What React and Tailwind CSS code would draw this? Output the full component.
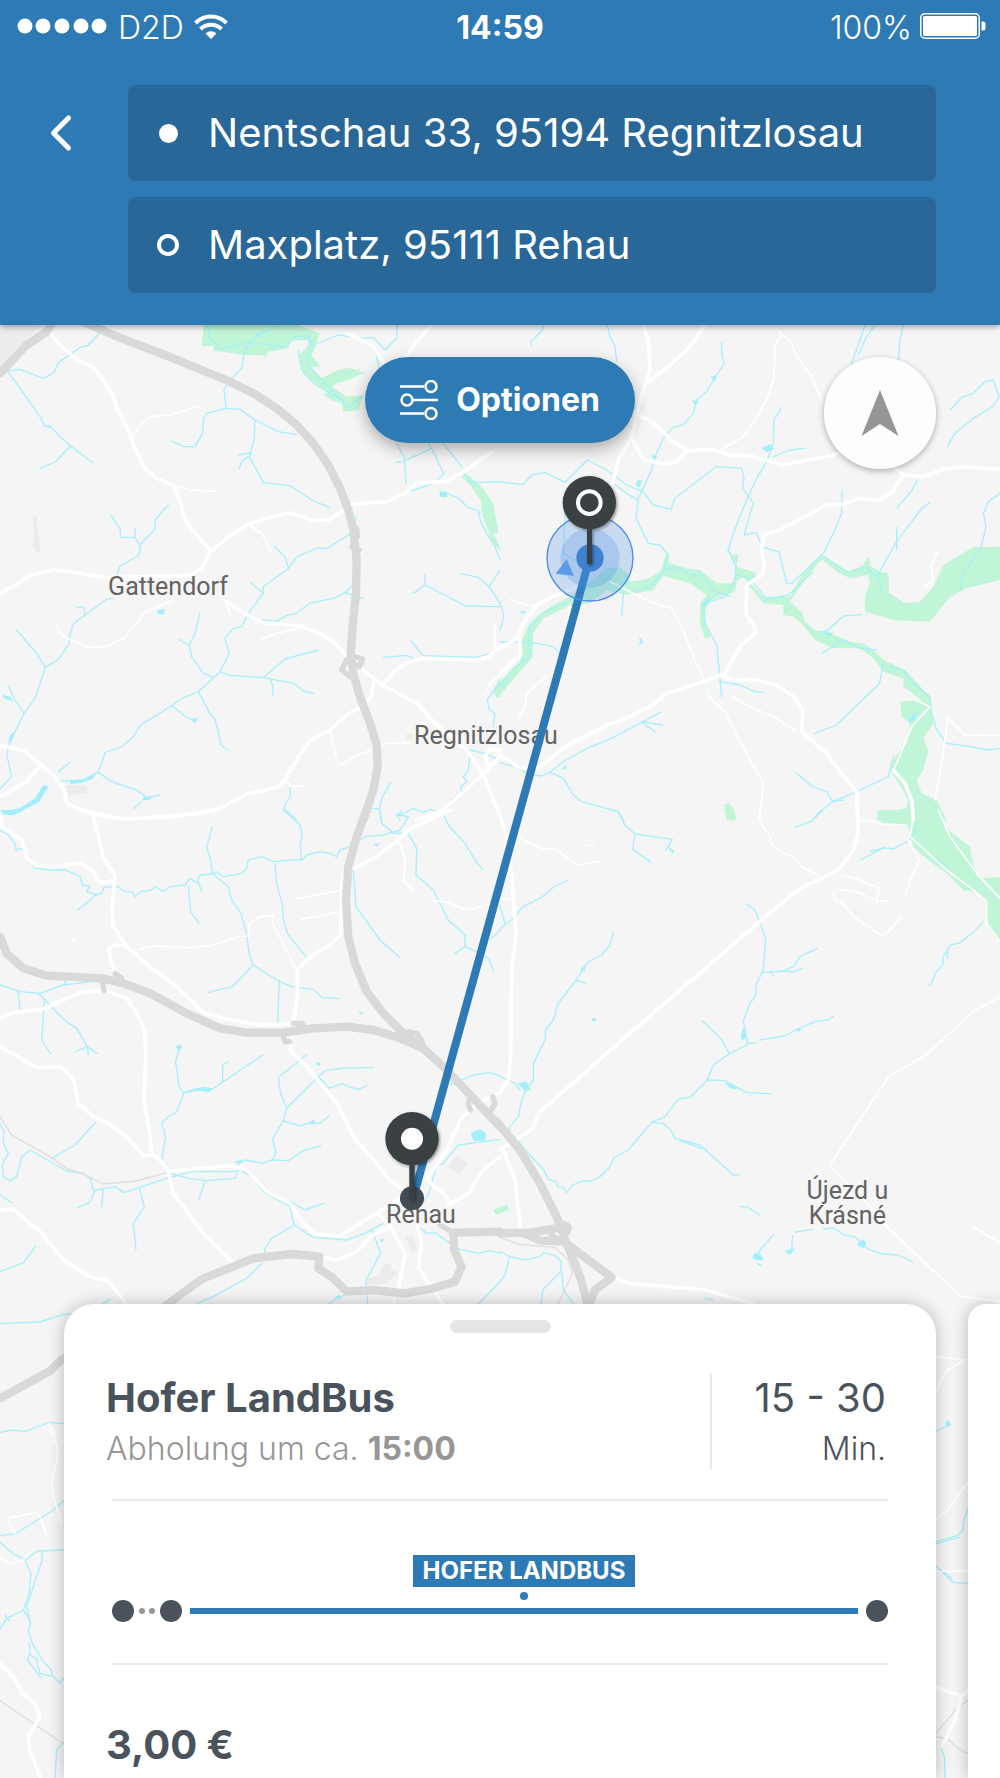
import { ChevronLeft } from 'lucide-react';

// Map sections, each with its own origin; points are local to the section.
const sections = [
  {
    x: 0,
    y: 0,
    areas: [
      '0,10 125,10 70,70 0,145',
      '98,592 110,592 122,698 108,698 106,686 95,682 104,670',
      '196,1396 258,1394 266,1418 206,1424',
      '1215,1245 1240,1240 1235,1262 1218,1258',
    ],
    parks: [
      '612,10 880,10 960,40 945,80 935,105 962,140 925,140 965,175 1000,155 1040,143 1070,150 1080,145 1075,158 1100,155 1050,178 1010,190 995,200 1040,230 1090,225 1075,270 1030,275 1025,250 995,240 970,225 985,215 940,185 905,150 900,105 925,75 925,60 870,62 865,85 805,95 800,107 735,105 690,98 640,92 640,78 605,78',
      '1395,458 1440,495 1480,550 1495,640 1468,642 1445,580 1442,540 1415,500 1385,470',
      '1468,642 1480,642 1500,680 1500,690 1475,665',
      '1500,1075 1480,1110 1490,1135 1500,1130',
    ],
    lakes: [
      '5,1475 60,1465 105,1435 130,1395 145,1400 118,1445 70,1470 40,1486 10,1484',
      '210,1382 250,1380 290,1360 275,1378 240,1390 212,1392',
      '1318,514 1342,516 1340,532 1320,530',
      '140,314 154,318 146,326',
      '470,872 495,866 490,884 476,882',
      '572,1196 595,1194 585,1210',
      '8,1125 30,1130 40,1145 12,1135',
      '25,1270 30,1245 45,1235 35,1265',
      '430,1430 455,1430 450,1440 428,1440',
      '765,40 785,38 775,52',
    ],
    water: [
      '298,40 262,78 240,82 175,128 162,158 130,175 60,148 22,152 60,205 120,290 135,320 150,318 180,350 212,378 278,428',
      '212,378 165,426 120,446',
      '840,15 775,45 750,68 665,85 628,55 625,15',
      '750,68 735,90 725,145 690,180 672,210 678,265 620,280 610,300 608,340 585,380 550,380 515,363',
      '750,68 860,80 880,50 925,48 940,75 1015,45 1090,55 1120,52 1155,90 1190,55 1192,15',
      '920,55 935,70 920,130 980,195 1045,262 1090,228',
      '895,90 905,150 940,190 1025,240',
      '678,265 720,268 765,300 835,335 890,344',
      '765,300 762,360 748,410 790,488 870,497 935,540 990,563',
      '716,405 752,398 748,410 726,422 718,444',
      '505,555 490,570 466,600 464,628 420,675 418,705 360,738 350,765',
      '332,585 360,625 362,652 404,652 420,675 M404,652 405,626',
      '822,678 855,710 866,745 790,800 790,820 745,880 724,920 700,925 674,955 688,1000 660,1055 595,1115 545,1135 515,1157 420,1217 400,1250 365,1280 316,1297 295,1355 250,1380 170,1384',
      '866,745 888,712 950,684 980,686 1050,642 1070,590',
      '752,788 790,820',
      '1090,835 1035,818 1000,835 928,850 890,880 860,886 830,904 745,895',
      '1058,795 1035,818',
      '340,836 322,836 255,885 220,912 210,940 208,970 175,1018 136,1042 105,1135 72,1180 30,1265 20,1300 34,1370 0,1407',
      '255,885 250,860 230,862',
      '50,930 110,1000 136,1042',
      '72,1180 45,1140 25,1097',
      '600,878 585,940 568,975 575,1010 608,1058 640,1073 M568,975 535,958',
      '660,1055 690,1066 790,1073 855,1017 955,990',
      '790,1073 880,1090 914,1115 940,1120 M810,1078 820,1100 817,1125',
      '515,1157 560,1192 580,1200',
      '595,1115 628,1178 645,1197 664,1275 685,1290',
      '295,1357 335,1385 410,1410 440,1432 480,1425 M400,1466 425,1445 M175,1355 210,1327',
      '870,1402 872,1425 850,1465 890,1500',
      '1172,1387 1145,1435 1138,1466 1115,1466 M1138,1466 1145,1500',
      '1190,370 1214,415 1218,488 M1190,428 1215,422 1295,385 1285,370 M1295,385 1332,462 1300,490 1235,513',
      '1330,370 1385,440 M1400,465 1415,488 1500,486',
      '1342,520 1375,534 1405,563 1435,572 1442,605 1460,640 1485,680 1500,720',
      '1130,110 1150,200 M1275,765 1275,795 1398,858 1500,860 M1275,795 1240,820',
      '1380,760 1435,772 1468,800 1500,850 M1500,750 1468,800',
      '1150,1012 1220,1006 1240,1014 M1232,962 1270,1007 1430,1012 1470,1000',
      '1500,1085 1462,1140 1468,1170 1485,1180 1480,1220',
      '1500,1320 1455,1300 1410,1290 M1410,1310 1405,1350 1390,1370 1400,1385 1382,1400 1385,1420 1355,1440 1345,1465 1310,1475 1290,1468 1270,1478 1240,1465 1215,1478 1190,1485 1200,1500',
    ],
    minor: [
      '398,350 420,315 452,290 510,285 595,260',
      '522,497 570,510 648,514',
      '745,615 785,640 815,698',
      '165,910 190,950 265,982 320,980 370,955 410,910 435,877 518,842',
      '675,840 690,882 M785,958 830,940 895,925',
      '990,1230 1010,1315 M1015,1337 1070,1308 1160,1270 1235,1268',
      '855,1380 875,1400 912,1398 M1485,910 1484,985 M1500,1065 1470,1090 1455,1120',
    ],
    roads: [
      '150,40 185,80 230,118 285,145 310,185 338,220 350,265 385,330 400,375 435,445 470,475 522,497 540,545 560,610 632,692',
      '0,822 95,765 160,750 210,755 320,773 440,770 570,765 605,745 632,695 680,655 740,615 800,595 870,578 940,602 985,600 1060,552 1160,545 1215,520 1250,490 1340,483 1400,450 1475,395',
      '680,845 740,885 790,908 900,918 960,940 1005,970 1050,1020 1150,1097 1250,1150 1310,1215 1400,1290 1450,1362 1500,1490',
      '1150,1097 1180,1055 1220,1028 1270,1015 1430,1020 1465,1010 1500,980',
      '1120,1090 1115,1130 1085,1160 1040,1185 990,1230 930,1262 895,1310 855,1380 830,1403 740,1422 670,1460 600,1480 400,1497 330,1492 270,1480 200,1450 192,1408 165,1370 120,1332 70,1292 0,1275',
      '120,1338 80,1385 0,1430',
      '1040,40 1115,75 1150,125 M1220,108 1250,65 1290,20',
      '1500,1310 1450,1362 1330,1470 1250,1500',
      '1450,1362 1465,1340 1455,1310 1470,1285 1500,1290',
    ],
    major: [
      '155,10 140,35 80,75 0,160',
      '260,10 340,45 520,115 690,185 760,220 830,265 890,315 940,370 985,435 1020,505 1045,570 1060,630 1070,720 1068,820 1058,920 1052,1000 1060,1060 1080,1130 1110,1210 1130,1275 1133,1340 1120,1410 1090,1500',
    ],
    ramps: ['1050,1005 1088,1018 1078,1040 1058,1030', '1055,1010 1040,1020 1025,1050 1050,1070', '1070,625 1072,650 M1055,680 1078,690'],
  },
  {
    x: 1500,
    y: 0,
    areas: [],
    parks: [
      '0,1085 40,1045 62,1020 65,960 90,910 150,860 210,830 265,790 320,745 360,742 385,765 390,785 440,778 480,755 500,700 508,705 505,728 560,745 600,750 650,790 700,790 708,760 705,725 678,690 690,695 700,705 715,700 710,740 770,758 765,775 750,790 790,830 830,830 870,830 905,765 960,705 1045,755 1090,735 1107,708 1112,738 1140,755 1165,760 1168,820 1215,850 1260,845 1300,800 1330,735 1420,682 1500,680 1500,780 1400,805 1350,830 1290,905 1180,900 1095,875 1095,830 1110,790 1105,765 1050,775 1010,755 965,718 920,770 880,830 870,845 905,875 915,905 945,930 990,940 1050,965 1090,970 1130,1000 1150,1020 1215,1050 1290,1130 1290,1160 1300,1210 1270,1255 1285,1290 1270,1350 1250,1380 1265,1420 1310,1440 1340,1500 1130,1500 1135,1470 1160,1475 1220,1465 1225,1440 1200,1395 1170,1350 1185,1310 1220,1270 1230,1210 1205,1190 1200,1145 1265,1140 1210,1100 1210,1075 1150,1055 1120,1015 1080,985 1000,985 945,960 910,915 880,890 850,885 850,855 790,850 750,800 730,770 710,785 705,815 640,835 618,860 615,900 632,950 615,955 600,910 600,850 620,825 570,790 490,768 460,810 380,825 320,810 270,850 200,860 130,895 100,940 98,1010 60,1055 0,1125',
      '672,1455 685,1450 700,1465 705,1500 680,1500',
    ],
    lakes: [
      '632,170 650,165 645,185',
      '785,385 810,372 822,388 800,396',
      '452,405 472,408 465,420',
      '412,478 426,482 420,502 408,498',
      '408,982 420,970 418,950 430,966',
      '575,240 598,246 586,256',
      '1225,1200 1245,1175 1250,1190 1232,1210',
      '55,875 80,874 70,882',
      '972,935 1000,940 990,950',
      '185,1345 200,1335 196,1350',
      '608,850 634,830 630,845 612,860',
    ],
    water: [
      '132,15 126,32 92,66 93,75 M322,15 330,50 345,80 350,125',
      '665,66 665,100 672,132 640,180 620,215 590,240 580,280 548,315 520,322 490,355 465,410 455,450 415,535 408,595 445,670 480,675 505,705 490,755 450,800 400,815',
      '0,486 70,493 95,465 135,458 195,487 262,420 320,450 380,495 430,515 460,555 513,568 525,535 648,440 725,445 732,475 728,505 760,550 732,645 768,637 787,680 838,697 860,790 875,790 965,705 1045,758 1100,742 1135,775 1145,795 1138,818',
      '340,490 380,520 412,540',
      '845,262 822,300 820,370 800,425 770,475 740,540 700,640 685,690 708,740 705,775 680,828 610,850 615,910 650,975 660,1080 665,1130',
      '820,410 870,390 915,385',
      '1095,15 1080,60 1055,130 M1125,15 1100,50 1075,105 M1210,15 1200,60 1195,125',
      '1350,270 1385,232 1420,220 1455,185 1480,180 1498,230 1480,258 1420,295 1365,340 1342,380',
      '1253,480 1235,512 1190,565 M1190,622 1190,690',
      '1026,510 1025,580 1000,640 970,700 M1290,548 1265,565 1190,665 1130,770',
      '1500,520 1465,545 1450,580 1458,620 1445,675 1420,720 1392,755 1380,810',
      '710,765 750,775 800,838 865,825 940,755',
      '490,750 530,742 575,765 605,765 645,815 690,828',
      '960,938 985,930 1030,888 1085,884 M965,1000 1030,960 1080,985 1130,990',
      '660,1085 720,1095 765,1115 790,1118',
      '1150,1030 1138,1092 1045,1180 1010,1215 945,1240',
      '1170,1040 1210,1050 1235,1085 1290,1130 1295,1180 1310,1230 1340,1270 1400,1278 1465,1290 1500,1285',
      '0,1328 45,1340 85,1362 125,1368 150,1357 190,1325 260,1285 320,1262 420,1210 480,1178 M425,1205 488,1215 M430,1210 465,1235',
      '150,1357 190,1375 220,1425 245,1445 355,1475 370,1500',
      '890,1360 935,1398 980,1415 998,1445 1070,1415 1165,1370 1180,1310',
      '998,1445 960,1475 938,1500 M998,1445 1030,1440',
      '195,580 190,700 225,720 M0,965 95,968 160,980 180,1000 M0,845 12,890 0,930',
      '270,800 220,840 125,880 90,920 85,965 90,1010 40,1045 0,1095',
      '372,800 365,885 372,888 M375,765 385,800',
    ],
    minor: [
      '825,20 845,45 825,75 822,170 800,240 760,310 730,350 665,388 M845,45 870,60 890,110 930,160 965,240',
      '330,785 390,815 450,845 515,865 545,920 580,1010 610,1075',
      '620,1110 630,1135 675,1175 720,1265 790,1390 778,1500',
      '700,1132 760,1165 830,1195 885,1232',
      '1500,1247 1395,1245 1345,1195 1320,1360 1305,1440',
      '1312,695 1293,740 1300,780 1275,800 M150,1060 80,1120 75,1165 55,1195',
      '30,838 60,850 100,860 M210,850 205,900',
      '1180,1350 1190,1330 1235,1220 1290,1160 1235,1135',
    ],
    roads: [
      '430,15 445,60 450,150 420,240 395,350 355,420 338,490',
      '615,15 570,80 510,135 440,190',
      '420,288 460,308 520,365 565,392 640,388 690,405 750,407 850,435 1000,405 1090,365 1140,400 1210,465 1270,470 1330,448 1390,440 1500,448',
      '395,355 430,418 490,433 530,425 560,395',
      '1210,465 1175,518 1135,542 1075,535 1030,553 980,555 840,630 790,645 785,690 793,745 785,765 740,795 738,880 770,935 720,980 670,1068',
      '0,1305 60,1345 120,1340 205,1275 330,1212 370,1200 460,1155 500,1120 600,1088 660,1065 700,1082 760,1078 830,1095 880,1130 908,1170 905,1235 980,1300 1020,1355 1070,1415 1073,1500',
      '0,985 50,955 70,910 110,855 160,830 230,800 M60,960 62,1005 0,1060',
      '1180,1350 1215,1390 1235,1440 1240,1500',
    ],
    major: [],
    ramps: [],
  },
  {
    x: 0,
    y: 1470,
    areas: [
      '1370,1035 1405,1060 1378,1092 1345,1070',
      '1215,1280 1235,1275 1255,1320 1235,1325',
      '1150,1365 1170,1358 1175,1380 1195,1385 1160,1420 1100,1425 1105,1405 1140,1395',
    ],
    parks: ['1480,1200 1500,1190 1500,1210 1488,1213'],
    lakes: [
      '0,0 70,0 60,8 30,15 10,10',
      '527,710 538,702 547,712 538,722',
      '575,838 610,830 640,836 628,847',
      '1412,970 1440,957 1458,970 1455,992 1420,992',
      '948,760 955,755 962,762 955,768',
      '1068,595 1075,605 1092,608 1080,613',
      '1120,102 1140,100 1130,110',
      '700,1056 735,1048 720,1060',
      '930,935 945,928 945,940 935,945',
      '1140,1288 1152,1288 1146,1298',
    ],
    water: [
      '0,60 25,75 45,100 48,120 65,115 85,150 105,175 155,180 195,180 220,190 240,200 248,225 270,228 260,245 290,255 305,250 312,232 350,228 375,245 395,245 405,260 420,245 455,240 465,230 490,245 510,230 555,225 570,205 590,218 600,195 635,192 650,185 670,200 725,190 740,175 745,150 785,140 820,155 880,150 910,148 920,135 960,125 990,130 1010,140 1020,120 1050,110 1095,80 1150,75 1200,60 1225,20 1195,15 1205,0',
      '288,255 234,300 M565,228 572,305 597,340 M595,215 605,245',
      '637,50 620,110 632,150 637,190 685,230 695,270 722,308 740,370 747,430 760,465 830,510 875,530 940,538 965,562 1018,566',
      '760,465 697,530 625,547 M838,510 833,635',
      '825,160 830,220 847,285 850,330 862,370 920,442',
      '850,0 900,45 907,75 900,105 905,150',
      '1060,180 1068,290 1140,390 1200,443',
      '1138,0 1145,40 1180,70 1225,70 1250,115 1248,195 1300,240 1345,330 1395,375 1395,410 1430,425 1465,445 1480,482 M1395,410 1365,430 M1500,360 1470,390',
      '1325,0 1345,45 1395,100 1425,150 1448,178',
      '0,525 60,545 120,550 190,525 300,512 M55,545 60,600 M190,525 200,510',
      '115,550 155,590 195,632 230,655 262,710 227,725 M262,710 290,730 M262,710 265,735',
      '133,575 125,690 153,732',
      '538,715 527,755 537,830 552,848 640,835 788,735 M668,812 668,765 685,755 M552,848 528,908 505,920 485,940 497,980 485,1050 495,1080',
      '552,848 580,838',
      '920,735 835,802 842,850 860,895 848,935 818,985 828,1030 815,1050 790,1060 735,1050 710,1065 M1122,772 1025,775 975,782 955,800 925,830 860,895',
      '955,800 988,835 1025,820 1045,830 1075,838 1105,825 M848,932 900,948 930,938 960,940 988,918',
      '815,1050 865,1052 910,1022 962,1008',
      '287,937 225,1005 155,1045',
      '0,940 12,965 10,1000 25,1030 8,1060 10,1100 30,1112 50,1100 65,1040 90,1020 200,1083 250,1090 272,1108 280,1142 345,1130 372,1148 500,1105 575,1085 700,1085 720,1078 760,1105 790,1145 870,1190 882,1245 940,1282 1040,1290 1095,1270 1150,1240',
      '0,1155 35,1178 M233,1193 268,1178 285,1142 310,1135 305,1190',
      '418,1132 433,1190 400,1240 408,1318 M615,1112 597,1167 M510,1090 565,1105 620,1112 705,1105 715,1080',
      '840,1170 872,1175 915,1200 972,1180 M882,1245 815,1285 795,1315 795,1335 M785,1360 740,1405 640,1460 590,1480',
      '108,1308 70,1358 0,1385 M330,1468 300,1487',
      '1118,1265 1142,1330 1098,1410 1103,1480 M1042,1452 1010,1465 985,1483',
      '1500,988 1375,1005 1330,1060 1310,1068 1285,1155 1255,1195 M1255,1250 1280,1270 1305,1268 1370,1315 1435,1330 1470,1322 1500,1330',
      '1350,825 1420,795 1470,788 1500,798 M1500,1415 1435,1483',
    ],
    minor: [
      '418,418 460,408 560,413 630,408 710,382 745,378 748,340 780,320 820,315 815,335 890,480',
      '890,265 1020,242 M905,328 1022,305 M1197,95 1215,140 1212,215 1243,243 M1297,272 1340,275 1400,300 1500,275',
      '212,390 228,390 M1030,200 1020,240',
      '1180,1480 1190,1440',
    ],
    roads: [
      '240,0 370,27 520,20 650,0 M280,20 310,140 345,200 337,280 338,345 380,410 450,470 530,530 610,608 690,630 780,645 880,640 892,560 892,480 925,445 990,405 1022,375 1025,240 1030,200',
      '0,10 5,50 65,90 80,145 110,168 160,170 240,160 275,180 300,218 345,212',
      '380,408 340,405 325,420 345,490',
      '0,625 40,608 130,597 240,548 315,540 380,565 410,610 435,665 437,740 432,870 450,970 455,1030 480,1050 505,1085 520,1150 610,1270 695,1355',
      '0,710 110,772 180,770 220,805 235,880 280,920 320,937 380,980 430,1037 460,1035',
      '505,1083 690,1068 740,1080 800,1145 870,1180 905,1235 945,1272 1020,1278 1200,1165',
      '875,690 870,720 930,780 1010,880 1060,980 1100,1025 1170,1110 1210,1140',
      '0,1200 40,1198 120,1265 190,1350 270,1400 325,1413 380,1483',
      '1062,175 1120,145 1195,90 1225,60 1350,0',
      '1490,850 1420,890 1380,930 1340,1020 1280,1110 1330,1150 1350,1180 M1500,1040 1450,1080 1405,1150 1345,1185',
      '960,1340 1010,1350 1070,1325 1110,1280 1160,1255',
      '1135,1210 1170,1250 1215,1330 1195,1440 M1250,1240 1265,1300 1255,1370 1280,1410 1330,1483',
    ],
    major: [
      '1100,0 1070,80 1045,170 1038,270 1045,380 1065,460 1100,545 1150,610 1210,670 1270,715 1340,780 1420,865 1500,950',
      '0,380 20,430 70,475 140,497 310,505 370,520 450,550 560,610 660,655 740,668 850,668 940,655 1040,650 1120,660 1200,685 1270,715',
      '480,1500 560,1440 610,1405 700,1370 760,1345 880,1332 958,1340 955,1375 1000,1405 1040,1445 1120,1440 1215,1450 1300,1435 1365,1415 1385,1370 1362,1320 1360,1268 1500,1265',
    ],
    ramps: [
      '305,510 312,542 M345,490 365,505',
      '880,640 905,640 915,655 M850,680 855,695 870,695',
      '1225,665 1250,670 1265,690 1270,715',
      '1410,860 1405,885 1412,900 M1465,915 1485,880 1478,860',
      '1360,1268 1320,1245',
    ],
    rails: ['0,920 35,975 150,1040 200,1075 245,1090 310,1122 410,1113 500,1088'],
  },
  {
    x: 1500,
    y: 1470,
    areas: [],
    parks: [
      '1145,0 1320,0 1345,60 1410,110 1420,165 1440,205 1500,200 1500,400 1465,350 1455,270 1420,245 1390,240 1340,190 1290,155 1240,110 1225,50 1145,40 1130,5',
      '678,0 700,0 710,25 700,35 688,22',
      '0,1192 22,1183 27,1200 0,1210',
    ],
    lakes: [
      '443,150 452,148 450,158',
      '505,118 522,122 518,130',
      '275,625 288,625 286,633 276,633',
      '722,680 730,650 738,680 732,690 724,688',
      '675,818 705,826 712,838 690,835',
      '758,1345 762,1330 785,1335 790,1352 770,1350',
      '852,1322 887,1315 870,1335',
      '1070,1305 1088,1288 1100,1300 1090,1315',
      '767,1358 785,1362 780,1368',
      '52,820 80,815 92,840 75,842',
      '240,480 258,462 254,484',
      '888,655 905,658 895,666',
    ],
    water: [
      '330,0 355,5 375,45 405,72 517,88 497,122 M405,72 398,118 450,155 M505,112 522,125',
      '968,0 937,32 885,52 M1225,92 1180,117 1150,113 1082,150 M1150,115 1112,123',
      '203,212 165,228 125,262 65,293 45,322 0,355 M0,288 15,342',
      '340,367 330,405 305,435 265,455 228,510 175,580 160,630 137,660 135,690 100,760 100,810 78,840 65,870 55,920 30,950 25,970 50,985 75,1020 130,1078 145,1108 170,1115 172,1130 190,1132 200,1148 218,1125 250,1112 272,1115 300,1100 330,1070 342,1043 385,1020 455,937 495,920 535,867 570,862 622,810 640,765 690,730 740,705 742,695 730,632 750,580 768,555 768,525 790,480 797,385 765,300 740,282',
      '228,510 257,520 M0,800 45,820 60,840',
      '785,488 850,483 880,470 900,440 952,415 M850,483 880,486 907,475 M810,485 822,498',
      '742,700 767,699 M780,690 855,678 890,658 945,635 990,628 1000,618 M608,633 660,683 688,730',
      '622,810 675,812 740,848 813,851',
      '455,937 490,940 512,960 525,985 600,1005 700,1095 717,1095 M540,992 620,1020',
      '1450,335 1425,362 1380,398 1352,405 1330,440 1328,465 1305,490 1300,508 1288,528 M1342,420 1343,447',
      '822,1273 790,1308 770,1335 M878,1277 875,1320 M885,1266 938,1258 M970,1257 1000,1254 1035,1276 1065,1280 1105,1318 1150,1332 1195,1335 1237,1355',
      '0,1325 30,1340 75,1350 120,1340 130,1328 165,1337 185,1355 182,1385 128,1440 123,1483 M185,1385 190,1440 222,1483 M27,1345 15,1395 0,1415',
      '615,1466 630,1466 638,1472 M720,1188 735,1192 M742,1190 778,1215',
      '1240,20 1252,45 1230,90 M1300,145 1345,170',
    ],
    minor: [
      '780,0 778,30 810,80 812,100 850,130 880,140 905,170 965,200 M60,85 120,115 170,118 210,152 240,165 302,153',
      '1025,195 1075,208 1137,235 1130,272 1168,273 M1020,240 1070,245 1130,272',
      '1000,250 1005,268 1030,282 1060,320 1150,380 1175,355 1200,320',
      '1225,92 1258,148 1228,215 1216,255 M1075,35 1100,32 1150,42 1220,45',
      '1315,0 1350,80 1430,190 1500,265 M1240,20 1230,80 1340,180 1420,240 1460,275 1460,340 1500,395',
      '1500,562 1425,600 1278,735 1165,800 988,1068 1100,1180 1160,1250 1380,1458 1500,1475 M1420,1250 1500,1298',
      '262,105 285,108 M0,268 30,268',
    ],
    roads: [
      '0,15 20,80 35,200 48,370 35,480 32,740 25,810 0,850',
      '1073,0 1075,70 1060,120 1020,175 965,205 900,235 790,325 430,635 120,905 95,958 50,988 0,1018',
      '10,1020 45,1110 62,1260 M345,1405 390,1420 620,1440 760,1483',
    ],
    major: [
      '-10,935 60,1020 120,1120 170,1220 200,1300 240,1400 268,1500',
      '0,1270 90,1268 200,1250',
      '90,1278 120,1292 190,1294 335,1402 285,1440 265,1490',
    ],
    ramps: ['150,1270 175,1290 205,1265 208,1250 190,1240', '60,1272 100,1285'],
    rails: ['0,1283 60,1303 165,1312 205,1350 218,1390 175,1480'],
  },
  {
    x: 0,
    y: 2910,
    areas: [],
    parks: [],
    lakes: ['1005,20 1020,15 1022,28'],
    water: [
      '0,101 120,96 190,73 225,73',
      '0,427 35,420 75,424 150,397 200,402',
      '200,625 160,660 45,732 0,737',
      '0,757 38,790 75,810 112,783 200,780 M75,810 93,850 88,910 70,960 20,985 0,1018 M127,785 125,815 80,950 92,1000 85,1020 97,1060 130,1115 155,1140 155,1155 180,1180 200,1150',
      '88,1060 90,1090 82,1110 125,1165 M90,1095 108,1105 120,1150 150,1158 M70,960 90,992 M15,975 28,992',
      '200,1345 170,1380 165,1464',
    ],
    minor: [
      '145,400 155,435 168,430 145,400 172,470 172,510 155,570 157,610 185,700',
      '0,805 30,820 70,810 98,780 M45,732 22,685 105,668 120,680 138,730',
    ],
    roads: ['0,1120 45,1165 65,1210 105,1240 120,1280 85,1340 90,1385 122,1464'],
    major: ['0,325 150,243 185,208 220,190'],
    ramps: [],
    rails: ['0,1232 200,1368'],
  },
  {
    x: 1500,
    y: 2910,
    areas: [],
    parks: [],
    lakes: ['1335,402 1345,388 1352,405 1345,412'],
    water: [
      '1300,428 1345,405 M1300,757 1370,738 1388,722 1392,690 1410,640 M1300,764 1380,742',
      '1300,820 1360,878 1410,880 M1315,835 1355,865 M1323,1375 1333,1400 1335,1464',
    ],
    minor: ['1300,198 1395,210 1345,238 1325,265 1308,310', '1300,695 1345,660 1370,620 1410,570 M1300,845 1410,843'],
    roads: ['1300,1190 1385,1218 1365,1290 1325,1370 M1385,1218 1410,1200'],
    major: [],
    ramps: [],
    rails: ['1410,1228 1375,1250 1300,1340 1340,1345 1380,1380 1410,1392'],
  },
];

const lineLayers = [
  { key: 'water', color: '#a8effa', width: 4 },
  { key: 'minor', color: '#ffffff', width: 5 },
  { key: 'rails', color: '#dedede', width: 4 },
  { key: 'roads', color: '#ffffff', width: 11 },
  { key: 'ramps', color: '#d9d9d9', width: 16 },
  { key: 'major', color: '#d9d9d9', width: 25 },
];

const areaLayers = [
  { key: 'areas', color: '#ececec' },
  { key: 'parks', color: '#c1f5d7' },
  { key: 'lakes', color: '#a0effb' },
];

const labels = [
  { x: 504, y: 826, lines: ['Gattendorf'] },
  { x: 1458, y: 1273, lines: ['Regnitzlosau'] },
  { x: 1263, y: 2709, lines: ['Rehau'] },
  { x: 2542, y: 2638, lines: ['Újezd u', 'Krásné'] },
];

function MapView() {
  return (
    <svg
      viewBox="0 15 3000 4359"
      preserveAspectRatio="xMidYMin slice"
      className="absolute inset-0 h-full w-full bg-[#f5f5f5]"
      role="img"
      aria-label="Karte"
    >
      <defs>
        <filter id="pinShadow" x="-30%" y="-30%" width="160%" height="160%">
          <feDropShadow dx="4" dy="5" stdDeviation="5" floodOpacity="0.4" />
        </filter>
      </defs>

      {areaLayers.map(({ key, color }) => (
        <g key={key} fill={color}>
          {sections.map((s, i) => (
            <g key={i} transform={`translate(${s.x} ${s.y})`}>
              {s[key].map((points) => <polygon key={points} points={points} />)}
            </g>
          ))}
        </g>
      ))}

      {lineLayers.map(({ key, color, width }) => (
        <g key={key} fill="none" stroke={color} strokeWidth={width} strokeLinejoin="round" strokeLinecap="round">
          {sections.map((s, i) => (
            <g key={i} transform={`translate(${s.x} ${s.y})`}>
              {(s[key] || []).map((d) => <path key={d} d={`M${d}`} />)}
            </g>
          ))}
        </g>
      ))}

      <g
        className="font-['Roboto',sans-serif]"
        fontSize="75"
        fill="#636363"
        stroke="#f5f5f5"
        strokeWidth="6"
        paintOrder="stroke"
        textAnchor="middle"
      >
        {labels.map(({ x, y, lines }) => (
          <text key={lines[0]} x={x} y={y}>
            {lines.map((line, i) => <tspan key={line} x={x} dy={i * 75}>{line}</tspan>)}
          </text>
        ))}
      </g>

      {/* Route */}
      <path d="M1769 714 1240 2632" stroke="#2e7ab4" strokeWidth="24" />

      {/* Current position */}
      <circle cx="1770" cy="714" r="129" fill="#4a8fe7" fillOpacity="0.25" stroke="#4a8fe0" strokeWidth="4" />
      <circle cx="1770" cy="714" r="89" fill="#4a8fe7" fillOpacity="0.25" />
      <circle cx="1770" cy="714" r="41" fill="#3f82d0" />
      <path d="M1700 718 1722 768 1667 761Z" fill="#5b9ae4" />

      {/* Pins */}
      <g filter="url(#pinShadow)">
        <rect x="1761" y="600" width="15" height="132" fill="#3a3f43" />
        <circle cx="1768" cy="548" r="80" fill="#3a3f43" />
      </g>
      <circle cx="1768" cy="548" r="34" fill="none" stroke="#fff" strokeWidth="12" />

      <circle cx="1236" cy="2635" r="36" fill="#444c53" />
      <g filter="url(#pinShadow)">
        <rect x="1228" y="2510" width="16" height="128" fill="#3a3f43" />
        <circle cx="1236" cy="2456" r="80" fill="#3a3f43" />
      </g>
      <circle cx="1236" cy="2456" r="33" fill="#fff" />
    </svg>
  );
}

function StatusBar() {
  return (
    <div className="grid h-14 grid-cols-3 items-center px-3.5 text-[32px] leading-none">
      <div className="flex items-center gap-2.5 pl-0.5">
        <svg width="92" height="16" viewBox="0 0 92 16" fill="currentColor" className="-mt-1">
          {[9, 27, 46, 65, 83].map((cx) => <circle key={cx} cx={cx} cy="8" r="7.5" />)}
        </svg>
        <span className="font-light">D2D</span>
        <svg width="34" height="25" viewBox="0 0 34 25" fill="none" stroke="currentColor" strokeWidth="4" className="-mt-1">
          <path d="M1.5 9A22 22 0 0 1 32.5 9" />
          <path d="M6.5 15A15 15 0 0 1 27.5 15" />
          <path d="M11.5 19.5A8 8 0 0 1 22.5 19.5L17 25Z" fill="currentColor" stroke="none" />
        </svg>
      </div>
      <span className="text-center font-bold">14:59</span>
      <div className="flex items-center justify-end gap-2">
        <span className="font-light">100%</span>
        <svg width="66" height="26" viewBox="0 0 66 26" className="-mt-1">
          <rect x="0.75" y="0.75" width="58.5" height="24.5" rx="4" fill="none" stroke="currentColor" strokeWidth="1.5" />
          <rect x="3" y="3" width="54" height="20" rx="1.5" fill="currentColor" />
          <path d="M61.5 8.5h1.5a2.5 2.5 0 0 1 2.5 2.5v4a2.5 2.5 0 0 1-2.5 2.5h-1.5z" fill="currentColor" />
        </svg>
      </div>
    </div>
  );
}

function AddressField({ id, label, value, filled }) {
  return (
    <div className="flex h-24 items-center gap-7 rounded-lg bg-[#286798] pr-6 pl-7">
      <label htmlFor={id} className="flex w-6 shrink-0 justify-center">
        {filled
          ? <span className="size-[19px] rounded-full bg-white" />
          : <span className="size-[22px] rounded-full border-4 border-white" />}
      </label>
      <input
        id={id}
        type="text"
        aria-label={label}
        defaultValue={value}
        className="min-w-0 flex-1 bg-transparent text-[40px] leading-[48px] outline-none"
      />
    </div>
  );
}

function OptionsIcon() {
  return (
    <svg width="38" height="40" viewBox="0 0 38 40" fill="none" stroke="currentColor" strokeWidth="2.5">
      <path d="M0 6.5h24M13 20h25M0 33.5h24" />
      <circle cx="31" cy="6.5" r="5.5" />
      <circle cx="7" cy="20" r="5.5" />
      <circle cx="31" cy="33.5" r="5.5" />
    </svg>
  );
}

function RideCard() {
  return (
    <article className="min-w-0 flex-1 rounded-t-[30px] bg-white px-12 pt-4 text-[#4a535b] shadow-[0_0_16px_rgba(0,0,0,0.25)]">
      <div className="mx-auto h-[13px] w-[101px] rounded-full bg-[#e5e5e5]" />

      <div className="mt-10 flex border-b-2 border-[#e8e8e8] pb-6">
        <div className="-ml-1.5 flex-1">
          <h2 className="text-[40px] leading-[50px] font-bold">Hofer LandBus</h2>
          <p className="text-[32px] leading-[52px] font-light text-[#969696]">
            Abholung um ca. <strong className="font-bold">15:00</strong>
          </p>
        </div>
        <div className="h-24 w-0.5 bg-[#e8e8e8]" />
        <div className="w-[176px] pr-0.5 text-right">
          <p className="text-[40px] leading-[50px]">15 - 30</p>
          <p className="text-[32px] leading-[52px] font-light">Min.</p>
        </div>
      </div>

      <div className="flex items-end border-b-2 border-[#e8e8e8] pt-[54px] pb-[41px]">
        <span className="size-[22px] rounded-full bg-[#4a535b]" />
        <span className="mx-[5px] flex h-[22px] items-center gap-1">
          <span className="size-1.5 rounded-full bg-[#969696]" />
          <span className="size-1.5 rounded-full bg-[#969696]" />
        </span>
        <span className="size-[22px] rounded-full bg-[#4a535b]" />
        <div className="mx-2 flex flex-1 flex-col items-center pb-2">
          <span className="bg-[#2e7ab4] px-2.5 text-[24px] leading-8 font-bold text-white">HOFER LANDBUS</span>
          <span className="my-[5px] size-2 rounded-full bg-[#2e7ab4]" />
          <span className="mt-[3px] h-1.5 w-full bg-[#2e7ab4]" />
        </div>
        <span className="size-[22px] rounded-full bg-[#4a535b]" />
      </div>

      <p className="-ml-1.5 pt-[55px] pb-2 text-[40px] leading-[50px] font-bold">3,00 €</p>
    </article>
  );
}

export default function App() {
  return (
    <div className="flex h-screen flex-col overflow-hidden font-['Inter',sans-serif]">
      <header className="relative z-10 bg-[#2e7ab4] pb-8 text-white shadow-[0_2px_6px_rgba(0,0,0,0.35)]">
        <StatusBar />
        <div className="flex items-start pt-[29px] pr-16">
          <button type="button" aria-label="Zurück" className="flex h-24 w-32 shrink-0 items-center justify-center pr-1.5">
            <ChevronLeft className="size-[60px]" strokeWidth={2} />
          </button>
          <div className="flex min-w-0 flex-1 flex-col gap-4">
            <AddressField id="start" label="Start" value="Nentschau 33, 95194 Regnitzlosau" filled />
            <AddressField id="ziel" label="Ziel" value="Maxplatz, 95111 Rehau" />
          </div>
        </div>
      </header>

      <main className="relative flex flex-1 flex-col justify-between">
        <MapView />

        <div className="relative grid grid-cols-[1fr_auto_1fr] items-start px-16 pt-8">
          <button
            type="button"
            className="col-start-2 flex h-[86px] items-center gap-[18px] rounded-full bg-[#2e7ab4] px-[35px] text-[32px] font-bold text-white shadow-[0_6px_16px_rgba(0,0,0,0.3)]"
          >
            <OptionsIcon />
            Optionen
          </button>
          <button
            type="button"
            aria-label="Standort"
            className="flex size-28 items-center justify-center justify-self-end rounded-full bg-white/80 shadow-[0_2px_6px_rgba(0,0,0,0.3)]"
          >
            <svg width="38" height="46" viewBox="0 0 38 46" fill="#969696">
              <path d="M19 0 37.5 46 19 34 0.5 46Z" />
            </svg>
          </button>
        </div>

        <div className="relative flex gap-8 pl-16">
          <RideCard />
          <div className="w-8 rounded-tl-[18px] bg-white shadow-[0_0_16px_rgba(0,0,0,0.25)]" />
        </div>
      </main>
    </div>
  );
}
